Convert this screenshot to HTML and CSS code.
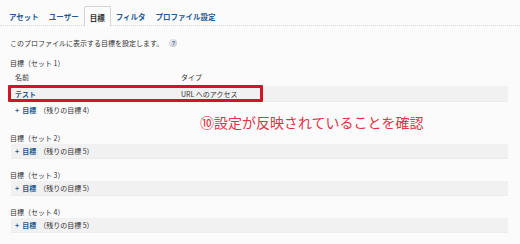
FILE: index.html
```html
<!DOCTYPE html>
<html lang="ja">
<head>
<meta charset="utf-8">
<link rel="stylesheet" href="styles.css">
</head>
<body>
<nav class="tabs">
  <span class="tab">アセット</span>
  <span class="tab">ユーザー</span>
  <span class="tab active">目標</span>
  <span class="tab">フィルタ</span>
  <span class="tab">プロファイル設定</span>
</nav>
<main class="content">
  <p class="desc">このプロファイルに表示する目標を設定します。<span class="help">?</span></p>

  <section class="set set1">
    <div class="set-title">目標（セット 1）</div>
    <div class="head-row"><span class="col-name">名前</span><span class="col-type">タイプ</span></div>
    <div class="data-row">
      <span class="col-name link">テスト</span><span class="col-type">URL へのアクセス</span>
      <span class="highlight"></span>
    </div>
    <div class="add-row plain"><span class="link"><span class="plus">+</span>目標</span><span class="rest">（残りの目標 4）</span></div>
    <div class="note">⑩設定が反映されていることを確認</div>
  </section>

  <section class="set">
    <div class="set-title">目標（セット 2）</div>
    <div class="add-row"><span class="link"><span class="plus">+</span>目標</span><span class="rest">（残りの目標 5）</span></div>
  </section>

  <section class="set">
    <div class="set-title">目標（セット 3）</div>
    <div class="add-row"><span class="link"><span class="plus">+</span>目標</span><span class="rest">（残りの目標 5）</span></div>
  </section>

  <section class="set">
    <div class="set-title">目標（セット 4）</div>
    <div class="add-row"><span class="link"><span class="plus">+</span>目標</span><span class="rest">（残りの目標 5）</span></div>
  </section>
</main>
</body>
</html>
```

FILE: styles.css
```css
html, body {
  margin: 0;
  padding: 0;
  background: #fbfbfb;
}
body {
  width: 520px;
  height: 244px;
  overflow: hidden;
  font-family: "Noto Sans CJK JP", "Noto Sans", sans-serif;
  font-size: 7px;
  color: #333;
}
.tabs {
  display: flex;
  align-items: stretch;
  margin-top: 6px;
  height: 19px;
  padding-left: 4px;
  border-bottom: 1px dotted #d8d8d8;
}
.tab {
  display: flex;
  align-items: center;
  padding: 1px 4px 0;
  font-size: 7.5px;
  font-weight: bold;
  color: #235a93;
  border: 1px solid transparent;
  border-bottom: none;
}
.tab.active {
  color: #333;
  padding: 1px 5px 0;
  border-color: #d2d2d2;
  background: #fdfdfd;
  margin-bottom: -1px;
  border-radius: 2px 2px 0 0;
}
.content {
  padding: 0 12px 0 11px;
}
.desc {
  margin: 10px 0 0 -1px;
  line-height: 14px;
  display: flex;
  align-items: center;
}
.help {
  display: inline-flex;
  align-items: center;
  justify-content: center;
  width: 8px;
  height: 8px;
  margin-left: 6px;
  border-radius: 50%;
  background: radial-gradient(circle at 40% 35%, #f2f2f2, #bdbdbd);
  color: #2f6cb0;
  font-size: 6px;
  font-weight: bold;
  font-family: "Liberation Sans", sans-serif;
}
.set {
  position: relative;
  margin-top: 10px;
}
.set1 {
  margin-top: 7px;
  padding-bottom: 4px;
}
.set-title {
  line-height: 12px;
  margin-left: -1px;
}
.head-row, .data-row, .add-row {
  display: flex;
  align-items: center;
  padding-left: 4px;
}
.head-row {
  height: 15px;
}
.data-row {
  position: relative;
  height: 15px;
  margin-top: 2px;
  background: #f1f1f1;
  border-bottom: 1px solid #ececec;
}
.col-name {
  width: 166px;
}
.add-row {
  height: 14px;
  background: #f1f1f1;
  border-bottom: 1px solid #ececec;
}
.add-row.plain {
  background: transparent;
  border-bottom-color: transparent;
  height: 15px;
}
.link {
  color: #235a93;
  font-weight: bold;
}
.plus {
  margin-right: 3px;
}
.rest {
  margin-left: 3px;
}
.highlight {
  position: absolute;
  left: -3px;
  top: -1px;
  width: 255px;
  height: 17px;
  box-sizing: border-box;
  border: 3px solid #d2142b;
  border-radius: 1px;
}
.note {
  position: absolute;
  left: 189px;
  top: 57px;
  font-size: 14px;
  line-height: 16px;
  color: #e23246;
  white-space: nowrap;
}
```
